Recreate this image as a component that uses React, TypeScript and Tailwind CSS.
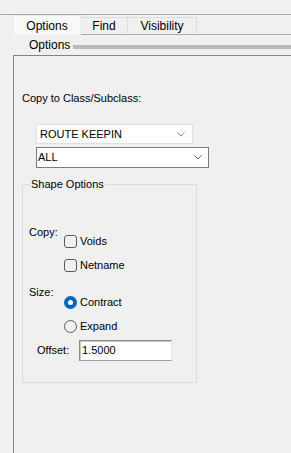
import React from "react";

const Chevron = ({ color }: { color: string }) => (
  <svg width="8" height="5" viewBox="0 0 8 5" className="block">
    <path d="M0.5 0.5 L4 4 L7.5 0.5" fill="none" stroke={color} strokeWidth="1" />
  </svg>
);

const Checkbox = ({ label }: { label: string }) => (
  <div className="flex items-center h-[13px]">
    <div className="w-[13px] h-[13px] rounded-[3px] border border-[#5d5d5d] box-border" />
    <span className="ml-[3px] text-[11px] leading-[13px]">{label}</span>
  </div>
);

const Radio = ({ label, checked }: { label: string; checked?: boolean }) => (
  <div className="flex items-center h-[13px]">
    {checked ? (
      <div className="w-[13px] h-[13px] rounded-full bg-[#0067c0] flex items-center justify-center">
        <div className="w-[5px] h-[5px] rounded-full bg-white" />
      </div>
    ) : (
      <div className="w-[13px] h-[13px] rounded-full border border-[#5d5d5d] box-border" />
    )}
    <span className="ml-[3px] text-[11px] leading-[13px]">{label}</span>
  </div>
);

export default function App() {
  return (
    <div
      className="w-[291px] h-[453px] bg-[#f0f0f0] overflow-hidden flex flex-col text-black"
      style={{ fontFamily: '"Liberation Sans", Arial, sans-serif' }}
    >
      <div className="h-[14px] shrink-0" />
      <div className="h-px bg-[#a9a9a9] shrink-0" />
      {/* tabs */}
      <div className="flex items-end h-[20px] pl-[13px] shrink-0">
        <div className="w-[68px] h-[20px] bg-[#f9f9f9] border-x border-t border-[#ececec] flex items-center justify-center text-[12px]">
          Options
        </div>
        <div className="w-[47px] h-[18px] border-t border-r border-[#dcdcdc] border-b border-b-[#a9a9a9] flex items-center justify-center text-[12px]">
          Find
        </div>
        <div className="w-[69px] h-[18px] border-t border-r border-[#dcdcdc] border-b border-b-[#a9a9a9] flex items-center justify-center text-[12px]">
          Visibility
        </div>
        <div className="flex-1 h-px bg-[#a9a9a9]" />
      </div>
      {/* section header */}
      <div className="h-[20px] shrink-0 flex items-center pl-[29px]">
        <span className="text-[12px] leading-[14px]">Options</span>
        <div className="flex-1 h-[4px] bg-[#b9b9b9] ml-[3px] mt-[3px]" />
      </div>
      {/* panel */}
      <div className="flex-1 ml-[13px] border-l border-t border-[#82848a] pl-[8px] pt-[36px]">
        <div className="text-[11px] leading-[13px]">Copy to Class/Subclass:</div>
        <div className="ml-[14px] mt-[19px] w-[157px] h-[20px] bg-white border border-[#e0e0e0] flex items-center pl-[3px] pr-[7px]">
          <span className="flex-1 text-[11px] leading-[13px]">ROUTE KEEPIN</span>
          <Chevron color="#8a8a8a" />
        </div>
        <div className="ml-[14px] mt-[3px] w-[173px] h-[21px] bg-white border border-[#7a7a7a] flex items-center pl-[1px] pr-[6px]">
          <span className="flex-1 text-[11px] leading-[13px]">ALL</span>
          <Chevron color="#6e6e6e" />
        </div>
        <fieldset className="mt-[10px] w-[175px] border border-[#dcdcdc] pb-[21px]">
          <legend className="ml-[7px] px-[1px] text-[11px] leading-[13px]">Shape Options</legend>
          <div className="flex mt-[35px] pl-[6px]">
            <div className="w-[35px] text-[11px] leading-[13px]">Copy:</div>
            <div className="flex flex-col gap-[11px] pt-[9px]">
              <Checkbox label="Voids" />
              <Checkbox label="Netname" />
            </div>
          </div>
          <div className="flex mt-[14px] pl-[6px]">
            <div className="w-[35px] text-[11px] leading-[13px]">Size:</div>
            <div className="flex flex-col gap-[11px] pt-[10px]">
              <Radio label="Contract" checked />
              <Radio label="Expand" />
            </div>
          </div>
          <div className="flex items-center mt-[7px] pl-[14px]">
            <div className="w-[42px] text-[11px] leading-[13px]">Offset:</div>
            <div className="w-[93px] h-[21px] bg-white border-t border-l border-t-[#8a8a8a] border-l-[#8a8a8a] border-r border-b border-r-[#e3e3e3] border-b-[#a0a0a0] flex items-center pl-[2px] shadow-[inset_1px_1px_0_#c8c8c8]">
              <span className="text-[11px] leading-[13px]">1.5000</span>
            </div>
          </div>
        </fieldset>
      </div>
    </div>
  );
}
